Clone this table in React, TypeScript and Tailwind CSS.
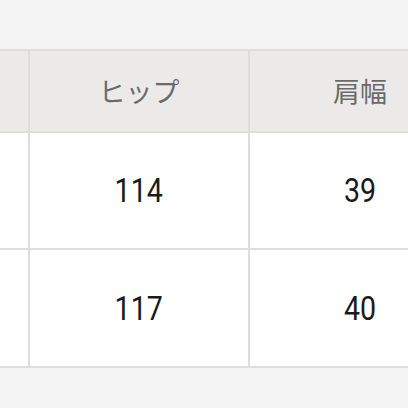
const rows = [
  { hip: '114', shoulder: '39', h: 'h-[117px]' },
  { hip: '117', shoulder: '40', h: 'h-[118px]' },
];

export default function App() {
  return (
    <div className="w-[408px] h-[408px] overflow-hidden bg-[#f4f3f3] font-['Noto_Sans_CJK_JP',sans-serif]">
      <div className="h-[49px]" />
      <div className="w-[700px] border-t-2 border-[#dedddc]">
        <div className="flex h-[82px] bg-[#ebeae9] border-b-2 border-[#dedddc]">
          <div className="w-[30px] border-r-2 border-[#dedddc]" />
          <div className="w-[220px] border-r-2 border-[#dedddc] flex items-center justify-center text-[27px] text-[#6a6a6a]">
            ヒップ
          </div>
          <div className="w-[220px] flex items-center justify-center text-[27px] text-[#6a6a6a]">
            肩幅
          </div>
        </div>
        {rows.map((r) => (
          <div key={r.hip} className={`flex ${r.h} bg-white border-b-2 border-[#dedddc]`}>
            <div className="w-[30px] border-r-2 border-[#dedddc]" />
            <div className="w-[220px] border-r-2 border-[#dedddc] flex items-center justify-center text-[34px] text-[#1a1a1a] font-['Roboto',sans-serif]">
              <span className="inline-block scale-x-[0.84]">{r.hip}</span>
            </div>
            <div className="w-[220px] flex items-center justify-center text-[34px] text-[#1a1a1a] font-['Roboto',sans-serif]">
              <span className="inline-block scale-x-[0.84]">{r.shoulder}</span>
            </div>
          </div>
        ))}
      </div>
    </div>
  );
}
